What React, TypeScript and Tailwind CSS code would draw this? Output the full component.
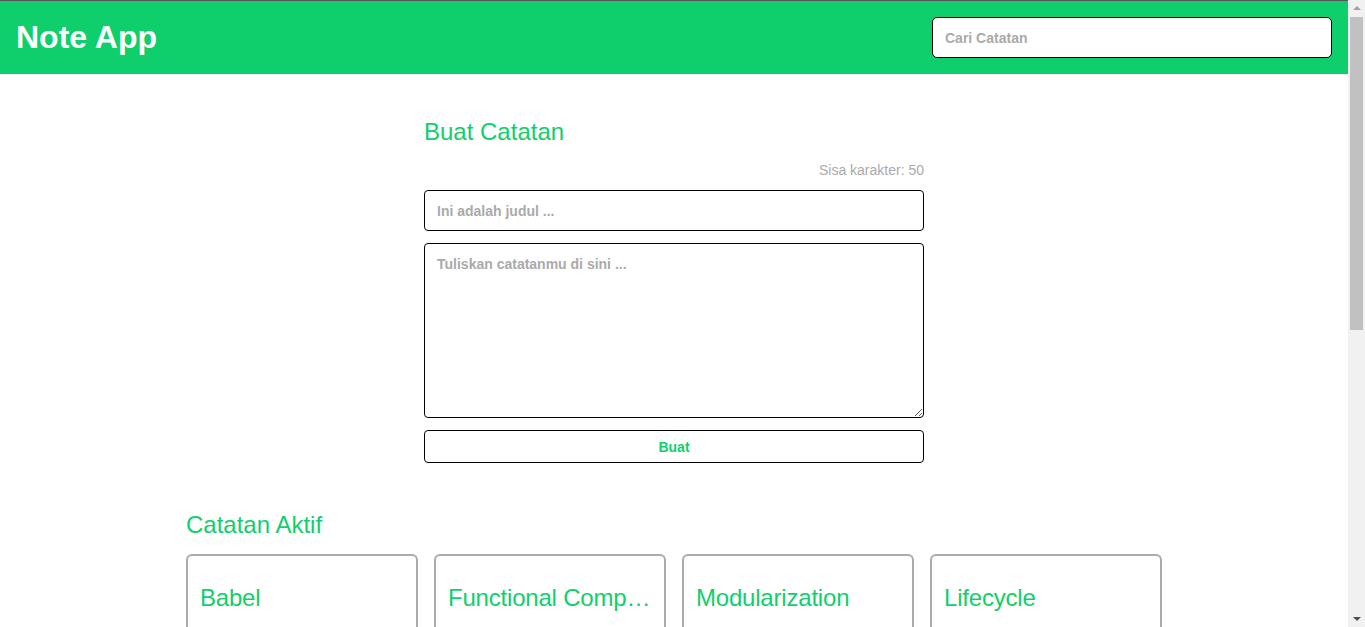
import { useState } from 'react'

const notes = [
  {
    id: 1,
    title: 'Babel',
    date: 'Kamis, 14 April 2022',
    body: 'Babel merupakan tools open-source yang digunakan untuk mengubah sintaks ECMAScript 2015+ menjadi sintaks yang didukung oleh JavaScript engine versi lama.',
  },
  {
    id: 2,
    title: 'Functional Component',
    date: 'Kamis, 14 April 2022',
    body: 'Functional component merupakan React component yang dibuat menggunakan fungsi JavaScript.',
  },
  {
    id: 3,
    title: 'Modularization',
    date: 'Kamis, 14 April 2022',
    body: 'Dalam konteks pemrograman JavaScript, modularization merupakan teknik dalam memecah atau menggunakan kode dalam berkas JavaScript secara terpisah berdasarkan tanggung jawabnya masing-masing.',
  },
  {
    id: 4,
    title: 'Lifecycle',
    date: 'Kamis, 14 April 2022',
    body: 'Dalam konteks React component, lifecycle merupakan kumpulan method yang menjadi siklus hidup mulai dari component dibuat (constructor), dicetak (render), pasca-cetak (componentDidMount), dan sebagainya.',
  },
]

const font = 'font-["Liberation_Sans",Arial,sans-serif]'

// window scrollbar as it shows in the screenshot
function Scrollbar() {
  return (
    <div className="fixed top-0 right-0 flex h-screen w-[17px] flex-col items-center bg-[#f1f1f1]">
      <div className="mt-[6px] h-0 w-0 border-x-[4px] border-b-[4px] border-x-transparent border-b-[#a3a3a3]" />
      <div className="mt-[7px] h-[313px] w-[13px] bg-[#c1c1c1]" />
      <div className="mt-auto mb-[6px] h-0 w-0 border-x-[4px] border-t-[4px] border-x-transparent border-t-[#505050]" />
    </div>
  )
}

export default function App() {
  const [title, setTitle] = useState('')
  const [body, setBody] = useState('')
  const [query, setQuery] = useState('')

  const left = 50 - title.length

  return (
    <div className={`min-h-screen bg-white ${font}`}>
      <div className="w-[calc(100%-17px)]">
        <div className="h-px bg-[#555]" />
        <header className="flex items-center justify-between bg-[#0ecf6c] px-4 py-4">
          <h1 className="text-[32px] font-bold leading-[37px] text-white">Note App</h1>
          <input
            type="text"
            value={query}
            onChange={(e) => setQuery(e.target.value)}
            placeholder="Cari Catatan"
            className="h-[41px] w-[400px] rounded-[5px] border border-black bg-white px-3 text-sm font-bold text-[#333] placeholder:text-[#aaa] focus:outline-none"
          />
        </header>

        <main className="mx-auto max-w-[1000px] px-3 pt-[44px]">
          <section className="mx-auto max-w-[500px]">
            <h2 className="text-2xl leading-[28px] text-[#10cf6c]">Buat Catatan</h2>
            <p className="mt-4 text-right text-sm leading-4 text-[#aaa]">Sisa karakter: {left}</p>
            <input
              type="text"
              value={title}
              onChange={(e) => setTitle(e.target.value.slice(0, 50))}
              placeholder="Ini adalah judul ..."
              className="mt-3 block h-[41px] w-full rounded-[4px] border border-black px-3 text-sm font-bold placeholder:text-[#aaa] focus:outline-none"
            />
            <textarea
              value={body}
              onChange={(e) => setBody(e.target.value)}
              placeholder="Tuliskan catatanmu di sini ..."
              className="mt-3 block h-[175px] w-full rounded-[4px] border border-black p-3 text-sm leading-4 font-bold placeholder:text-[#aaa] focus:outline-none"
            />
            <button
              type="button"
              className="mt-3 block h-[33px] w-full rounded-[4px] border border-black bg-white text-sm font-bold text-[#10cf6c]"
            >
              Buat
            </button>
          </section>

          <h2 className="mt-[48px] text-2xl leading-[28px] text-[#10cf6c]">Catatan Aktif</h2>
          <div className="mt-[15px] mb-12 grid grid-cols-4 gap-4">
            {notes.map((n) => (
              <article key={n.id} className="flex flex-col rounded-[6px] border-2 border-[#aaa]">
                <div className="flex-1 px-3 pt-[28px] pb-3">
                  <h3 className="truncate text-2xl leading-[28px] tracking-[-0.2px] text-[#10cf6c]">{n.title}</h3>
                  <p className="mt-5 text-sm text-[#aaa]">{n.date}</p>
                  <p className="mt-3 text-sm leading-5 text-[#333]">{n.body}</p>
                </div>
                <div className="flex border-t border-[#aaa]">
                  <button className="flex-1 py-2 text-sm font-bold text-[#ff5f52]">Delete</button>
                  <button className="flex-1 border-l border-[#aaa] py-2 text-sm font-bold text-[#10cf6c]">Arsipkan</button>
                </div>
              </article>
            ))}
          </div>
        </main>
      </div>
      <Scrollbar />
    </div>
  )
}
